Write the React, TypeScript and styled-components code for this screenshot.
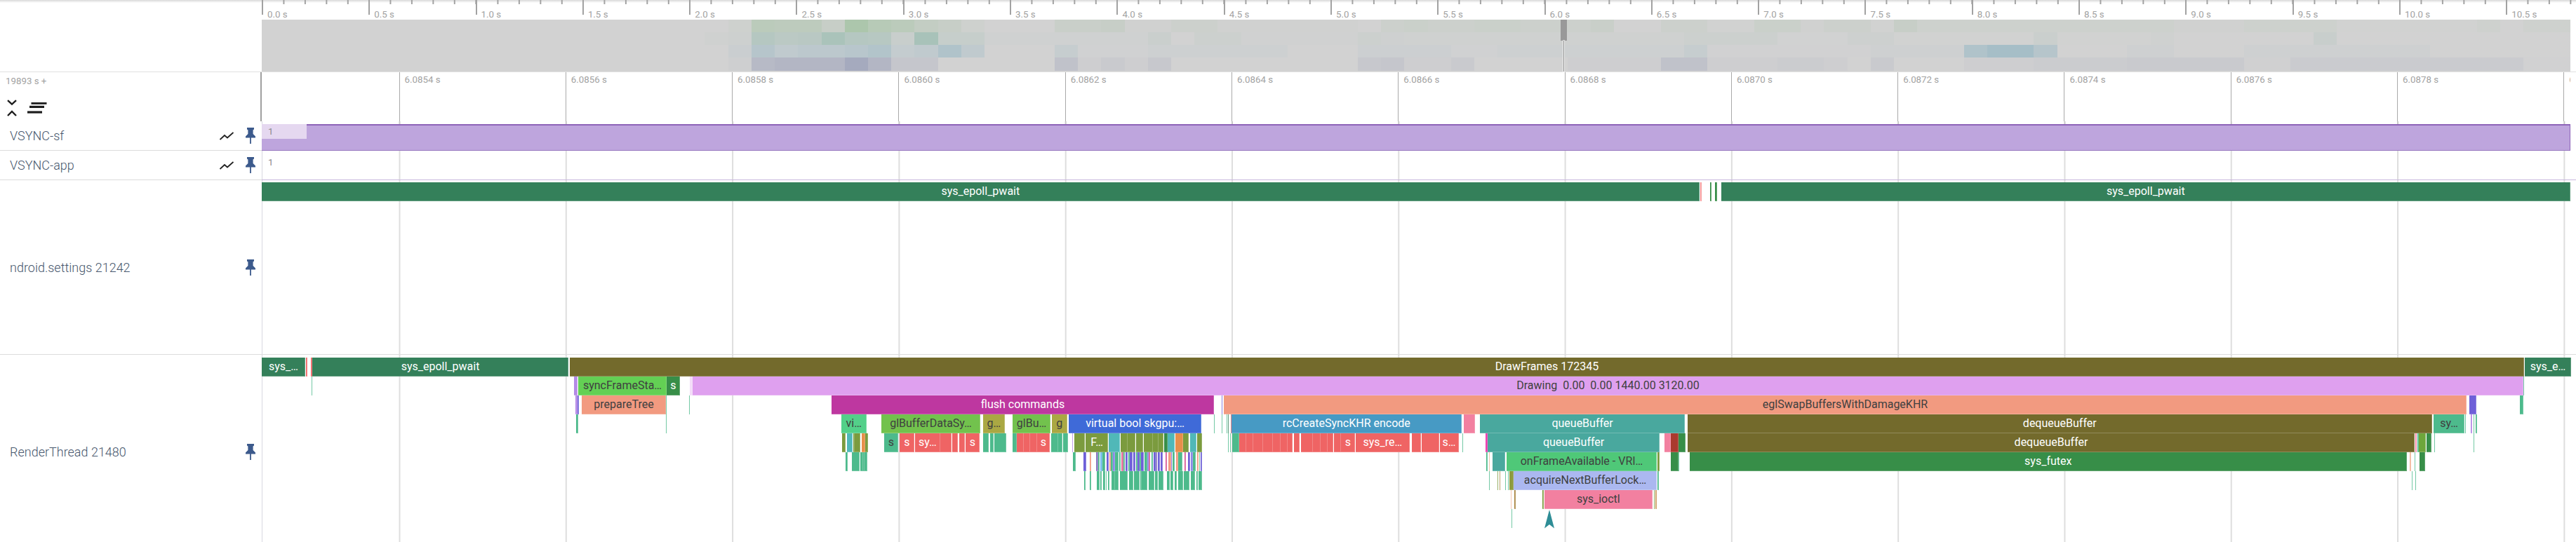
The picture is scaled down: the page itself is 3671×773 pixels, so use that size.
import React, { FC } from 'react';
import styled, { createGlobalStyle } from 'styled-components';

const GlobalStyle = createGlobalStyle`
  html, body {
    margin: 0;
    padding: 0;
    background: #fff;
    font-family: Roboto, 'Liberation Sans', sans-serif;
  }
`;

const SHELL_WIDTH = 373;
const CANVAS_WIDTH = 3290;
const OVERVIEW_STEP = 152.3;
const RULER_STEP = 237.3;
const RULER_OFFSET = 195.5;
const ROW_HEIGHT = 27;

const Page = styled.div`
  width: 3671px;
  height: 773px;
  overflow: hidden;
  display: flex;
  flex-direction: column;
`;
const OverviewPanel = styled.div`
  display: flex;
  height: 103px;
  box-sizing: border-box;
  flex-shrink: 0;
  border-bottom: 1px solid #e0e0e0;
  background: linear-gradient(to bottom, #d8d8d8, #fff 4px);
`;
const ShellSpacer = styled.div`
  width: ${SHELL_WIDTH}px;
  flex-shrink: 0;
`;
const OverviewBody = styled.div`
  flex: 1;
  min-width: 0;
  display: flex;
  flex-direction: column;
`;
const OverviewRuler = styled.div`
  display: flex;
  height: 28px;
  overflow: hidden;
`;
const OverviewTick = styled.div`
  width: ${OVERVIEW_STEP}px;
  flex-shrink: 0;
  box-sizing: border-box;
  padding: 13px 0 0 8px;
  font-size: 13.3px;
  line-height: 15px;
  color: #a2a2a2;
  background:
    linear-gradient(to right, #a2a2a2 2px, transparent 2px) 0 0 / 100% 21px no-repeat,
    linear-gradient(to right, #a2a2a2 1.5px, transparent 1.5px) ${OVERVIEW_STEP / 5}px 0 / ${OVERVIEW_STEP / 5}px 6px repeat-x;
`;
const HeatWrap = styled.div`
  position: relative;
  width: ${CANVAS_WIDTH}px;
  height: 74px;
`;
const ViewportHandle = styled.div`
  position: absolute;
  left: 1851px;
  top: 0;
  width: 9px;
  height: 30px;
  background: #999;
`;
const ViewportLine = styled.div`
  position: absolute;
  left: 1854.5px;
  top: 30px;
  width: 1.5px;
  height: 44px;
  background: #8f8f8f;
  box-shadow: 0 0 0 1px rgba(255, 255, 255, 0.6);
`;
const TimePanel = styled.div`
  display: flex;
  height: 70px;
  flex-shrink: 0;
`;
const TimeShell = styled.div`
  width: ${SHELL_WIDTH}px;
  flex-shrink: 0;
  box-sizing: border-box;
  padding: 5px 0 0 8px;
  border-right: 2px solid #a0a0a0;
  display: flex;
  flex-direction: column;
`;
const TimeOrigin = styled.div`
  font-size: 13.3px;
  line-height: 16px;
  color: #a2a2a2;
`;
const ToolRow = styled.div`
  display: flex;
  align-items: flex-start;
  gap: 15px;
  margin: 18px 0 0 2px;
`;
const TimeRuler = styled.div`
  display: flex;
  width: ${CANVAS_WIDTH}px;
  overflow: hidden;
  padding-left: ${RULER_OFFSET}px;
  box-sizing: border-box;
`;
const RulerTick = styled.div`
  width: ${RULER_STEP}px;
  flex-shrink: 0;
  box-sizing: border-box;
  border-left: 1.5px solid #a9a9a9;
  padding: 3px 0 0 7px;
  font-size: 13.3px;
  line-height: 16px;
  color: #a2a2a2;
`;
const Track = styled.div<{ $height: number }>`
  display: flex;
  height: ${({ $height }) => $height}px;
  flex-shrink: 0;
`;
const TrackShell = styled.div<{ $rule?: boolean }>`
  width: ${SHELL_WIDTH}px;
  flex-shrink: 0;
  box-sizing: border-box;
  padding: 0 9px 0 14px;
  display: flex;
  align-items: center;
  border-bottom: ${({ $rule }) => ($rule ? '1.5px solid #dcdcdc' : 'none')};
`;
const TrackTitle = styled.div`
  flex: 1;
  font-size: 18px;
  font-weight: 300;
  color: #46566c;
  white-space: nowrap;
`;
const TrackIcons = styled.div`
  display: flex;
  align-items: center;
  gap: 17px;
`;
const TrackCanvas = styled.div<{ $line?: string; $rule?: string }>`
  position: relative;
  flex: 1;
  min-width: 0;
  box-sizing: border-box;
  border-bottom: ${({ $rule }) => ($rule ? `1.5px solid ${$rule}` : 'none')};
  box-shadow: inset 1px 0 0 #d8d8e0;
  background: linear-gradient(to right, ${({ $line }) => $line || '#dedede'} 1.6px, transparent 1.6px)
    ${RULER_OFFSET}px 0 / ${RULER_STEP}px 100% repeat-x;
`;
const CounterBand = styled.div`
  position: absolute;
  left: 0;
  top: 4px;
  width: ${CANVAS_WIDTH}px;
  height: 38px;
  box-sizing: border-box;
  background: #bea5dd;
  border-top: 2px solid #8d63b8;
  border-bottom: 1.5px solid #9777bf;
  border-right: 1px solid #8d63b8;
`;
const CounterHover = styled.div`
  position: absolute;
  left: 0;
  top: 4px;
  width: 64px;
  height: 21px;
  background: #e5d8f0;
`;
const CounterValue = styled.div<{ $top: number }>`
  position: absolute;
  left: 9px;
  top: ${({ $top }) => $top}px;
  font-size: 13.3px;
  line-height: 16px;
  color: #8c8c8c;
`;
const SliceStack = styled.div<{ $top: number }>`
  padding-top: ${({ $top }) => $top}px;
  display: flex;
  flex-direction: column;
`;
const SliceRow = styled.div`
  position: relative;
  height: ${ROW_HEIGHT}px;
`;
const Slice = styled.div<{ $bg: string; $dark?: boolean }>`
  position: absolute;
  top: 0;
  bottom: 0;
  overflow: hidden;
  background: ${({ $bg }) => $bg};
  box-shadow: inset -1px -1px 0 rgba(255, 255, 255, 0.22);
  color: ${({ $dark }) => ($dark ? '#3f4040' : '#fff')};
  font-size: 16px;
  line-height: ${ROW_HEIGHT - 1}px;
  text-align: center;
  white-space: pre;
`;
const FlowArrow = styled.svg`
  position: absolute;
  left: 1828px;
  top: 221px;
`;

const c = {
  epoll: '#34805a',
  red: '#ef6464',
  olive: '#736a2c',
  lime: '#63d054',
  forest: '#378e48',
  orchid: '#dfa0ef',
  salmon: '#f29a80',
  magenta: '#be37a0',
  mint: '#53d089',
  leaf: '#72c24d',
  khaki: '#aaa843',
  royal: '#3f6ad8',
  sky: '#479ac4',
  pink: '#f280a0',
  sea: '#49a89e',
  jade: '#4dba8c',
  moss: '#7b9b3e',
  aqua: '#50b8b8',
  orange: '#e88f4a',
  brick: '#aa3a2e',
  peri: '#abb8f0',
  kelly: '#4fc878',
  violet: '#6e60d8',
  lav: '#b48ae6',
  blue: '#6fbce8',
  peach: '#f2b79a',
};

type SliceData = {
  from: number;
  to: number;
  bg: string;
  label?: string;
  dark?: boolean;
};
const s = (from: number, to: number, bg: string, label?: string, dark?: boolean): SliceData => ({
  from,
  to,
  bg,
  label,
  dark,
});
// positions noted from the zoomed dense area, 3 px per real px from x=1520
const z = (from: number, to: number, bg: string, label?: string, dark?: boolean): SliceData =>
  s(1520 + from / 3, 1520 + to / 3, bg, label, dark);

const settingsRows: SliceData[][] = [
  [
    s(373, 2421.7, c.epoll, 'sys_epoll_pwait'),
    s(2423, 2425, '#f28c8c'),
    s(2436.7, 2439.3, c.forest),
    s(2444.3, 2447, c.forest),
    s(2452.7, 3663, c.epoll, 'sys_epoll_pwait'),
  ],
];

const renderRows: SliceData[][] = [
  [
    s(373, 435, c.epoll, 'sys_…'),
    s(435.5, 438, c.red),
    s(443, 445, c.red),
    s(445, 810, c.epoll, 'sys_epoll_pwait'),
    s(812, 3597, c.olive, 'DrawFrames 172345'),
    s(3598, 3664, c.epoll, 'sys_e…'),
  ],
  [
    s(444, 445, c.jade),
    s(817.6, 823, c.lav),
    s(824, 950, c.lime, 'syncFrameSta…', true),
    s(950, 969, c.forest, 's'),
    s(983, 987, '#f3dcf8'),
    s(987, 3596, c.orchid, 'Drawing  0.00  0.00 1440.00 3120.00', true),
    s(3596, 3597, c.jade),
  ],
  [
    s(819.5, 823, c.lav),
    s(823, 824.5, c.violet),
    s(829, 949, c.salmon, 'prepareTree', true),
    s(949, 950, c.jade),
    s(982, 983, c.jade),
    s(1185, 1730, c.magenta, 'flush commands'),
    s(1741, 1742, c.violet),
    s(1744, 3515, c.salmon, 'eglSwapBuffersWithDamageKHR', true),
    s(3519.4, 3529, c.violet),
    s(3591, 3596, c.jade),
  ],
  [
    s(821, 824, c.jade),
    s(949, 950, c.jade),
    s(1198.5, 1235, c.mint, 'vi…', true),
    s(1256, 1397, c.leaf, 'glBufferDataSy…', true),
    s(1400.5, 1432, c.khaki, 'g…', true),
    s(1443, 1497, c.leaf, 'glBu…', true),
    s(1498.5, 1521, c.khaki, 'g', true),
    s(1523, 1712, c.royal, 'virtual bool skgpu:…'),
    s(1729.6, 1731, c.jade),
    s(1741, 1742, c.jade),
    s(1748, 1749, c.jade),
    s(1750, 1751, c.epoll),
    s(1753.5, 1754.6, c.red),
    s(1754.6, 2083, c.sky, 'rcCreateSyncKHR encode'),
    s(2085.7, 2102.5, c.pink),
    s(2108.7, 2401.5, c.sea, 'queueBuffer'),
    s(2404.6, 3466, c.olive, 'dequeueBuffer'),
    s(3468, 3512, c.jade, 'sy…', true),
    s(3513, 3514, c.jade),
    s(3521, 3523, c.lav),
    s(3524.5, 3525.5, c.jade),
    s(3528, 3529.5, c.jade),
  ],
  [
    s(1200, 1205, c.moss),
    s(1207, 1215, c.aqua),
    s(1216, 1217.5, c.moss),
    s(1218, 1226, c.moss),
    s(1227.5, 1232.6, c.orange),
    s(1233, 1237, c.moss),
    s(1259.7, 1280, c.jade, 's', true),
    s(1281.6, 1303, c.red, 's'),
    s(1303.6, 1340, c.red, 'sy…'),
    s(1340, 1355.6, c.red),
    s(1357, 1365, c.red),
    s(1367, 1375, c.red),
    s(1376, 1396, c.red, 's'),
    s(1400.5, 1409, c.jade),
    s(1410.7, 1416, c.jade),
    s(1417, 1433.7, c.jade),
    s(1443, 1449, c.jade),
    s(1449, 1459, c.red),
    s(1459, 1468, c.red),
    s(1468, 1478, c.red),
    s(1478, 1496, c.red, 's'),
    s(1497.5, 1507.6, c.jade),
    s(1508, 1514, c.jade),
    s(1514.5, 1522, c.jade),
    z(23, 27, c.lav),
    z(33, 78, c.moss),
    z(82, 177, c.moss, 'F…'),
    z(181, 229, c.aqua),
    z(232, 262, c.moss),
    z(262, 293, c.moss),
    z(296, 326, c.moss),
    z(329, 370, c.moss),
    z(370, 392, c.moss),
    z(392, 415, c.moss),
    z(418, 432, c.forest),
    z(433, 462, c.aqua),
    z(465, 497, c.orange),
    z(498, 522, c.moss),
    z(527, 555, c.aqua),
    z(557, 578, c.moss),
    s(1749.5, 1750.5, c.jade),
    s(1752.5, 1753.5, c.jade),
    s(1756, 1766, c.jade),
    s(1766.3, 1776, c.red),
    s(1776, 1785.7, c.red),
    s(1785.7, 1800, c.red),
    s(1800, 1814, c.red),
    s(1814, 1824.5, c.red),
    s(1824.5, 1834.7, c.red),
    s(1834.7, 1842, c.red),
    s(1844, 1852, c.red),
    s(1853.6, 1871, c.red),
    s(1871, 1881.5, c.red),
    s(1881.5, 1891.8, c.red),
    s(1891.8, 1900.5, c.red),
    s(1900.5, 1910.7, c.red),
    s(1910.7, 1931, c.red, 's'),
    s(1931.6, 2009, c.red, 'sys_re…'),
    s(2012, 2025, c.red),
    s(2026, 2050.5, c.red),
    s(2051.5, 2078.6, c.red, 's…'),
    s(2083.7, 2085, c.jade),
    s(2117, 2120, '#ea3fb0'),
    s(2120.4, 2364.8, c.sea, 'queueBuffer'),
    s(2372.4, 2380.6, c.pink),
    s(2380.6, 2391.8, c.brick),
    s(2392, 2402, c.forest),
    s(2404.6, 3441.5, c.olive, 'dequeueBuffer'),
    s(3442, 3444, c.pink),
    s(3445, 3447, c.jade),
    s(3447, 3457, '#6da63b'),
    s(3458, 3465.4, c.forest),
    s(3469, 3470, c.jade),
    s(3525, 3526, c.jade),
  ],
  [
    s(1205, 1207.6, c.jade),
    s(1214.3, 1225.5, c.jade),
    s(1226, 1229.6, c.jade),
    s(1230, 1231.6, c.jade),
    s(1232, 1235.7, c.jade),
    z(27, 38, c.jade),
    z(72, 83, c.violet),
    z(100, 104, c.salmon),
    z(127, 135, '#8a7ac0'),
    z(135, 142, c.jade),
    z(143, 152, c.blue),
    z(152, 165, c.jade),
    z(170, 180, c.violet),
    z(183, 190, c.salmon),
    z(190, 197, c.jade),
    z(198, 207, '#8a8ae8'),
    z(208, 222, c.jade),
    z(224, 230, c.jade),
    z(233, 243, '#e0709a'),
    z(244, 250, c.jade),
    z(253, 262, c.violet),
    z(263, 270, c.jade),
    z(270, 282, c.violet),
    z(285, 295, c.violet),
    z(296, 302, c.jade),
    z(304, 312, c.violet),
    z(313, 318, c.jade),
    z(318, 330, c.violet),
    z(332, 345, c.jade),
    z(345, 352, '#8a8ae8'),
    z(352, 358, '#d85a98'),
    z(362, 370, c.jade),
    z(372, 380, c.violet),
    z(380, 388, '#8a7ac0'),
    z(390, 400, c.violet),
    z(402, 412, c.violet),
    z(422, 430, '#d85a98'),
    z(434, 446, c.salmon),
    z(446, 450, c.violet),
    z(452, 462, c.jade),
    z(467, 476, c.salmon),
    z(478, 495, c.jade),
    z(503, 510, '#d85a98'),
    z(518, 528, c.violet),
    z(530, 540, '#8a8ae8'),
    z(540, 552, c.jade),
    z(557, 565, c.salmon),
    z(566, 570, c.jade),
    z(572, 579, c.violet),
    s(2118.4, 2120, c.jade),
    s(2122, 2123, c.peach),
    s(2127, 2145, c.sea),
    s(2147, 2361, c.kelly, 'onFrameAvailable - VRI…', true),
    s(2361.7, 2365, c.moss),
    s(2380.6, 2392, c.forest),
    s(2392, 2393, c.jade),
    s(2407.6, 3430, c.forest, 'sys_futex'),
    s(3434, 3436, c.peach),
    s(3441, 3442, c.jade),
    s(3448.3, 3456.5, c.forest),
  ],
  [
    z(75, 81, c.jade),
    z(99, 105, c.jade),
    z(130, 141, c.jade),
    z(144, 150, c.jade),
    z(155, 164, c.jade),
    z(168, 172, c.jade),
    z(178, 182, c.jade),
    z(192, 207, c.jade),
    z(208, 222, c.jade),
    z(228, 262, c.jade),
    z(268, 285, c.jade),
    z(288, 312, c.jade),
    z(315, 320, c.jade),
    z(320, 345, c.jade),
    z(350, 375, c.jade),
    z(378, 390, c.jade),
    z(392, 415, c.jade),
    z(430, 440, c.jade),
    z(445, 455, c.jade),
    z(462, 472, c.jade),
    z(477, 498, c.jade),
    z(500, 525, c.jade),
    z(530, 550, c.jade),
    z(555, 562, c.jade),
    z(565, 578, c.jade),
    s(2122.4, 2123.5, c.jade),
    s(2133.7, 2135, c.moss),
    s(2136.7, 2138, '#a8843f'),
    s(2145.4, 2146.5, c.jade),
    s(2148.5, 2150, c.jade),
    s(2151, 2156.6, '#8d9b3f'),
    s(2157, 2361, c.peri, 'acquireNextBufferLock…', true),
    s(2361.7, 2364.5, c.jade),
    s(3437, 3438, c.jade),
    s(3441.5, 3442.5, c.jade),
  ],
  [
    s(2152.5, 2154, c.peach),
    s(2158, 2160, '#a8843f'),
    s(2198, 2199.5, c.moss),
    s(2201, 2354.6, c.pink, 'sys_ioctl', true),
    s(2356.6, 2358.5, c.moss),
    s(2358.5, 2361, '#c89a5a'),
  ],
  [s(2154, 2155, c.jade)],
];

type HeatSpan = [number, number, number];
const span = (from: number, to: number, level: number): HeatSpan => [from, to, level];

const heatRows: { tone: [number, number, number]; levels: HeatSpan[] }[] = [
  {
    tone: [172, 198, 172],
    levels: [
      span(20, 20, 0.1), span(21, 21, 0.6), span(22, 23, 0.55), span(24, 24, 0.3), span(25, 25, 1),
      span(26, 26, 0.7), span(27, 27, 0.6), span(28, 28, 0.4), span(29, 29, 0.3), span(30, 30, 0.1),
      span(34, 35, 0.25), span(36, 36, 0.3), span(37, 38, 0.05), span(39, 40, 0.15), span(41, 46, 0.05),
      span(48, 48, 0.15), span(49, 49, 0.2), span(50, 51, 0.15), span(52, 53, 0.2), span(54, 56, 0.15),
      span(57, 57, 0.25), span(60, 61, 0.15), span(62, 63, 0.02), span(64, 65, 0.2), span(66, 66, 0.05),
      span(67, 68, 0.15), span(69, 69, 0.03), span(70, 70, 0.3), span(71, 81, 0.12), span(82, 84, 0.05),
      span(85, 88, 0.12), span(89, 94, 0.03), span(95, 95, 0.1), span(97, 98, 0.1),
    ],
  },
  {
    tone: [168, 194, 185],
    levels: [
      span(19, 19, 0.08), span(20, 20, 0.12), span(21, 21, 0.7), span(22, 22, 0.55), span(23, 23, 0.6),
      span(24, 24, 0.95), span(25, 25, 0.7), span(26, 26, 0.65), span(27, 27, 0.25), span(28, 28, 1),
      span(29, 30, 0.28), span(31, 37, 0.06), span(38, 38, 0.2), span(40, 41, 0.15), span(42, 46, 0.04),
      span(47, 47, 0.15), span(48, 48, 0.1), span(49, 60, 0.07), span(61, 64, 0.15), span(65, 67, 0.02),
      span(68, 69, 0.12), span(70, 75, 0.03), span(76, 76, 0.2), span(77, 80, 0.03), span(81, 81, 0.07),
      span(88, 88, 0.25),
    ],
  },
  {
    tone: [170, 192, 200],
    levels: [
      span(20, 20, 0.2), span(21, 21, 0.7), span(22, 22, 0.45), span(23, 24, 0.55), span(25, 25, 0.65),
      span(26, 26, 0.8), span(27, 27, 0.35), span(28, 28, 0.45), span(29, 29, 0.85), span(30, 30, 0.45),
      span(34, 34, 0.3), span(35, 37, 0.05), span(38, 43, 0.12), span(47, 50, 0.15), span(51, 52, 0.05),
      span(53, 56, 0.12), span(57, 60, 0.12), span(61, 61, 0.3), span(62, 68, 0.03), span(69, 72, 0.1),
      span(73, 73, 0.85), span(74, 75, 1.1), span(76, 76, 0.7), span(80, 81, 0.1), span(85, 92, 0.1),
    ],
  },
  {
    tone: [165, 170, 190],
    levels: [
      span(20, 20, 0.08), span(21, 21, 0.6), span(22, 24, 0.7), span(25, 25, 1), span(26, 26, 0.7),
      span(27, 28, 0.3), span(34, 34, 0.4), span(35, 35, 0.1), span(36, 36, 0.2), span(37, 37, 0.1),
      span(38, 38, 0.25), span(47, 47, 0.25), span(48, 48, 0.3), span(49, 50, 0.1), span(51, 51, 0.2),
      span(56, 59, 0.1), span(60, 60, 0.4), span(61, 61, 0.4), span(62, 64, 0.1), span(65, 66, 0.15),
      span(67, 67, 0.1), span(69, 69, 0.2), span(73, 75, 0.1), span(76, 79, 0.15), span(80, 84, 0.2),
      span(85, 86, 0.05), span(87, 96, 0.17), span(97, 98, 0.02),
    ],
  },
];

const HEAT_BASE = [210, 210, 210];
const CELL_WIDTH = 33.23;
const ROW_TOPS = [0, 18, 36, 54];

const heatFill = (tone: [number, number, number], level: number) =>
  `rgb(${tone.map((v, i) => Math.round(HEAT_BASE[i] + (v - HEAT_BASE[i]) * level)).join(',')})`;

const HeatMap: FC = () => (
  <svg width={CANVAS_WIDTH} height={74} shapeRendering="crispEdges" style={{ display: 'block' }}>
    <rect width={CANVAS_WIDTH} height={74} fill="#d2d2d2" />
    {heatRows.map((row, r) =>
      row.levels.map(([from, to, level]) => (
        <rect
          key={`${r}-${from}`}
          x={from * CELL_WIDTH}
          y={ROW_TOPS[r]}
          width={(to - from + 1) * CELL_WIDTH}
          height={r === 3 ? 19 : 18}
          fill={heatFill(row.tone, level)}
        />
      ))
    )}
  </svg>
);

const PinIcon: FC = () => (
  <svg width="14" height="23" viewBox="0 0 14 23">
    <path
      d="M2 0H12V2.6L10.6 3.4V9L14 12.6V14.4H7.9V23H6.1V14.4H0V12.6L3.4 9V3.4L2 2.6Z"
      fill="#3c5a8c"
    />
  </svg>
);

const ChartIcon: FC = () => (
  <svg width="20" height="12" viewBox="0 0 20 12">
    <polyline points="0.5,11 7,5 11,8.5 19.5,1" fill="none" stroke="#222" strokeWidth="1.9" />
  </svg>
);

const CollapseIcon: FC = () => (
  <svg width="14" height="24" viewBox="0 0 14 24">
    <polyline points="1,1.2 7,6.6 13,1.2" fill="none" stroke="#1d1d1d" strokeWidth="2.4" />
    <polyline points="1,23 7,17 13,23" fill="none" stroke="#1d1d1d" strokeWidth="2.4" />
  </svg>
);

const ExpandLinesIcon: FC = () => (
  <svg width="28" height="16" viewBox="0 0 28 16" style={{ marginTop: 4 }}>
    <rect x="5.5" y="0" width="22" height="2.8" fill="#1d1d1d" />
    <rect x="3" y="4.8" width="21" height="3.2" fill="#1d1d1d" />
    <rect x="0" y="12.4" width="21" height="3.2" fill="#1d1d1d" />
  </svg>
);

const SliceLayer: FC<{ rows: SliceData[][]; top: number }> = ({ rows, top }) => (
  <SliceStack $top={top}>
    {rows.map((row, i) => (
      <SliceRow key={i}>
        {row.map((item) => (
          <Slice
            key={`${item.from}-${item.bg}`}
            $bg={item.bg}
            $dark={item.dark}
            style={{ left: item.from - SHELL_WIDTH, width: item.to - item.from }}
          >
            {item.label}
          </Slice>
        ))}
      </SliceRow>
    ))}
  </SliceStack>
);

const overviewLabels = Array.from({ length: 22 }, (_, i) => `${(i * 0.5).toFixed(1)} s`);
const rulerLabels = Array.from({ length: 14 }, (_, i) => `${(6.0854 + i * 0.0002).toFixed(4)} s`);

const TrackButtons: FC<{ chart?: boolean }> = ({ chart }) => (
  <TrackIcons>
    {chart && <ChartIcon />}
    <PinIcon />
  </TrackIcons>
);

const App: FC = () => (
  <Page>
    <GlobalStyle />
    <OverviewPanel>
      <ShellSpacer />
      <OverviewBody>
        <OverviewRuler>
          {overviewLabels.map((label) => (
            <OverviewTick key={label}>{label}</OverviewTick>
          ))}
        </OverviewRuler>
        <HeatWrap>
          <HeatMap />
          <ViewportHandle />
          <ViewportLine />
        </HeatWrap>
      </OverviewBody>
    </OverviewPanel>

    <TimePanel>
      <TimeShell>
        <TimeOrigin>19893 s +</TimeOrigin>
        <ToolRow>
          <CollapseIcon />
          <ExpandLinesIcon />
        </ToolRow>
      </TimeShell>
      <TimeRuler>
        {rulerLabels.map((label) => (
          <RulerTick key={label}>{label}</RulerTick>
        ))}
      </TimeRuler>
    </TimePanel>

    <Track $height={42}>
      <TrackShell $rule>
        <TrackTitle>VSYNC-sf</TrackTitle>
        <TrackButtons chart />
      </TrackShell>
      <TrackCanvas $line="#c8c8c8">
        <CounterBand />
        <CounterHover />
        <CounterValue $top={7}>1</CounterValue>
      </TrackCanvas>
    </Track>

    <Track $height={42}>
      <TrackShell $rule>
        <TrackTitle>VSYNC-app</TrackTitle>
        <TrackButtons chart />
      </TrackShell>
      <TrackCanvas $rule="#c9b8de">
        <CounterValue $top={9}>1</CounterValue>
      </TrackCanvas>
    </Track>

    <Track $height={249}>
      <TrackShell $rule>
        <TrackTitle>ndroid.settings 21242</TrackTitle>
        <TrackButtons />
      </TrackShell>
      <TrackCanvas $rule="#dcdcdc">
        <SliceLayer rows={settingsRows} top={3} />
      </TrackCanvas>
    </Track>

    <Track $height={276}>
      <TrackShell>
        <TrackTitle>RenderThread 21480</TrackTitle>
        <TrackButtons />
      </TrackShell>
      <TrackCanvas>
        <SliceLayer rows={renderRows} top={4} />
        <FlowArrow width="14" height="27" viewBox="0 0 14 27">
          <path d="M7 0L14 26.5L7 21L0 26.5Z" fill="#2e8d96" />
        </FlowArrow>
      </TrackCanvas>
    </Track>
  </Page>
);

export default App;
